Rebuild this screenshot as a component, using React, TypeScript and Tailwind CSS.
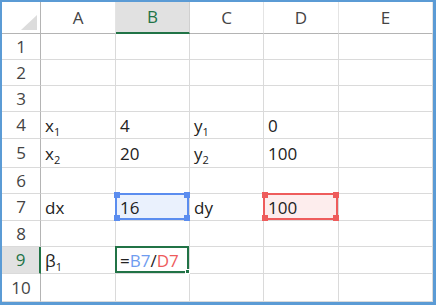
import React from 'react';

const cols = ['A', 'B', 'C', 'D', 'E'];
const rowHeights = [26, 26, 26, 27, 29, 26, 27, 26, 27, 28];

const Sub = ({ base, n }: { base: string; n: string }) => (
  <span>
    {base}
    <span className="relative top-[4px] text-[11px]">{n}</span>
  </span>
);

type Cells = Record<string, React.ReactNode>;

const cells: Cells = {
  A4: <Sub base="x" n="1" />,
  B4: '4',
  C4: <Sub base="y" n="1" />,
  D4: '0',
  A5: <Sub base="x" n="2" />,
  B5: '20',
  C5: <Sub base="y" n="2" />,
  D5: '100',
  A7: 'dx',
  B7: '16',
  C7: 'dy',
  D7: '100',
  A9: <Sub base="β" n="1" />,
  B9: (
    <span>
      =<span className="text-[#6f9cf0]">B7</span>/<span className="text-[#ee5c5c]">D7</span>
    </span>
  ),
};

function Handles({ color }: { color: string }) {
  return (
    <>
      <span className={`absolute -left-[3px] -top-[3px] w-[6px] h-[6px] ${color}`} />
      <span className={`absolute -right-[3px] -top-[3px] w-[6px] h-[6px] ${color}`} />
      <span className={`absolute -left-[3px] -bottom-[3px] w-[6px] h-[6px] ${color}`} />
      <span className={`absolute -right-[3px] -bottom-[3px] w-[6px] h-[6px] ${color}`} />
    </>
  );
}

function Overlay({ id }: { id: string }) {
  if (id === 'B7')
    return (
      <div className="absolute -left-[1px] -top-[1px] right-0 bottom-0 border-2 border-[#5b8def] bg-[#eaf1fd]">
        <Handles color="bg-[#5b8def]" />
      </div>
    );
  if (id === 'D7')
    return (
      <div className="absolute -left-[1px] -top-[1px] right-0 bottom-0 border-2 border-[#ee5c5c] bg-[#fdeded]">
        <Handles color="bg-[#ee5c5c]" />
      </div>
    );
  if (id === 'B9')
    return (
      <div className="absolute -left-[1px] -top-[1px] right-0 bottom-0 border-2 border-[#217346]">
        <span className="absolute -right-[3px] -bottom-[3px] w-[5px] h-[5px] bg-[#217346] border border-white" />
      </div>
    );
  return null;
}

export default function App() {
  return (
    <div
      className="w-[436px] h-[305px] bg-white border-[#5b9bd5] border-t-2 border-l-2 border-r-[3px] border-b-[3px] overflow-hidden"
      style={{ fontFamily: '"Open Sans", "Noto Sans", sans-serif' }}
    >
      <div className="grid grid-cols-[39px_75px_74px_74px_75px_1fr]">
        {/* header row */}
        <div className="relative h-[32px] border-r border-b border-[#b4b4b4]">
          <svg className="absolute right-[3px] bottom-[3px]" width="16" height="15">
            <polygon points="16,0 16,15 0,15" fill="#dcdcdc" />
          </svg>
        </div>
        {cols.map((c) => (
          <div
            key={c}
            className={`h-[32px] flex items-center justify-center text-[17px] ${
              c === 'B'
                ? 'bg-[#e1e1e1] text-[#217346] border-b-2 border-b-[#217346] border-r border-r-[#d0d0d0]'
                : 'text-[#444] border-b border-b-[#b4b4b4] border-r border-r-[#e4e4e4]'
            }`}
          >
            {c}
          </div>
        ))}

        {rowHeights.map((h, i) => {
          const r = i + 1;
          return (
            <React.Fragment key={r}>
              <div
                className={`flex items-center justify-center text-[17px] border-b border-b-[#dadada] ${
                  r === 9
                    ? 'bg-[#e1e1e1] text-[#217346] border-r-2 border-r-[#217346]'
                    : 'text-[#444] border-r border-r-[#b4b4b4]'
                }`}
                style={{ height: h }}
              >
                {r}
              </div>
              {cols.map((c) => {
                const id = `${c}${r}`;
                return (
                  <div
                    key={id}
                    className="relative border-r border-b border-[#dadada] text-[17px] text-[#222]"
                    style={{ height: h }}
                  >
                    <Overlay id={id} />
                    <div className="relative h-full flex items-center pl-[4px] pt-[1px]">
                      {cells[id]}
                    </div>
                  </div>
                );
              })}
            </React.Fragment>
          );
        })}
      </div>
    </div>
  );
}
